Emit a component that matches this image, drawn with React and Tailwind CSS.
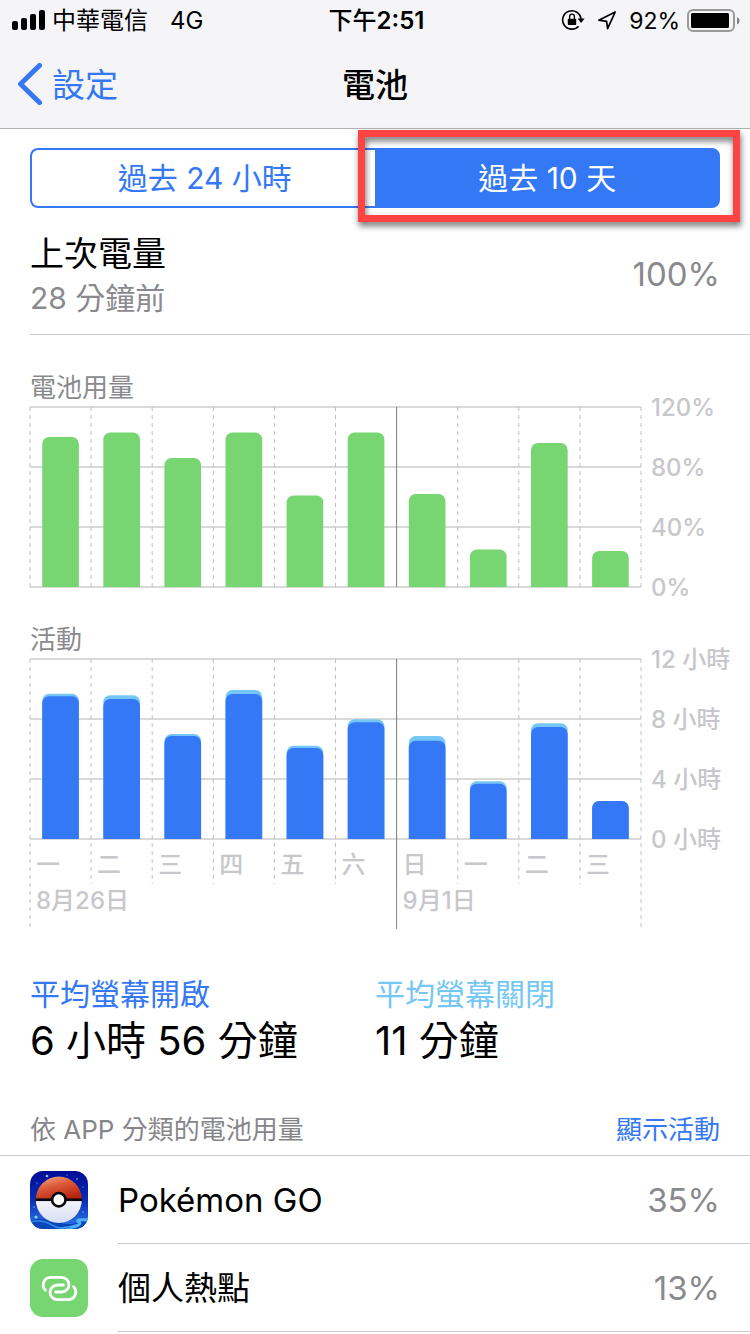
import { useState } from "react";

const days = [
  { label: "一", usage: 100, screenOn: 571, total: 581 },
  { label: "二", usage: 103, screenOn: 560, total: 575 },
  { label: "三", usage: 86, screenOn: 412, total: 420 },
  { label: "四", usage: 103, screenOn: 580, total: 596 },
  { label: "五", usage: 61, screenOn: 364, total: 373 },
  { label: "六", usage: 103, screenOn: 467, total: 479 },
  { label: "日", usage: 62, screenOn: 393, total: 412 },
  { label: "一", usage: 25, screenOn: 221, total: 231 },
  { label: "二", usage: 96, screenOn: 448, total: 463 },
  { label: "三", usage: 24, screenOn: 152, total: 152 },
];

const weeks = [
  { start: 0, label: "8月26日" },
  { start: 6, label: "9月1日" },
];

const usageSeries = [{ key: "usage", color: "#77d672" }];
const activitySeries = [
  { key: "total", color: "#75c6f5" },
  { key: "screenOn", color: "#3478f6" },
];

const PLOT_HEIGHT = 180;

function Chart({ title, series, max, ticks, withDates }) {
  return (
    <section>
      <h2 className="text-[26px] leading-[34px] text-[#8a8a8e]">{title}</h2>
      <div className="mt-[2px] flex">
        <svg
          className={`min-w-0 flex-1 overflow-visible ${withDates ? "h-[270px]" : "h-[180px]"}`}
          role="img"
          aria-label={title}
        >
          {ticks.map((tick, i) => (
            <line
              key={tick}
              x1="0"
              x2="100%"
              y1={i * 60}
              y2={i * 60}
              stroke="#d9d9d9"
              strokeWidth="2"
            />
          ))}

          {/* Day separators, the outer two run down past the dates */}
          {Array.from({ length: days.length + 1 }, (_, i) => {
            const isEdge = i === 0 || i === days.length;
            const labelled = isEdge ? 270 : 225;
            return (
              <line
                key={i}
                x1={`${i * 10}%`}
                x2={`${i * 10}%`}
                y1="0"
                y2={withDates ? labelled : PLOT_HEIGHT}
                stroke="#c0c0c0"
                strokeDasharray="4 4"
              />
            );
          })}
          <line
            x1="60%"
            x2="60%"
            y1="0"
            y2={withDates ? 270 : PLOT_HEIGHT}
            stroke="#808080"
          />

          {/* Nested svg clips the rounded bottoms of the bars */}
          <svg width="100%" height={PLOT_HEIGHT}>
            {series.map(({ key, color }) =>
              days.map((day, i) => {
                const height = (day[key] / max) * PLOT_HEIGHT;
                return (
                  <rect
                    key={`${key}-${i}`}
                    x={`${i * 10 + 2}%`}
                    y={PLOT_HEIGHT - height}
                    width="6%"
                    height={height + 12}
                    rx="7"
                    fill={color}
                  />
                );
              })
            )}
          </svg>

          {withDates && (
            <g fill="#c7c7cc" fontSize="24" fontWeight="500">
              {days.map((day, i) => (
                <text key={i} x={`${i * 10}%`} y="214" dx="6">
                  {day.label}
                </text>
              ))}
              {weeks.map((week) => (
                <text key={week.label} x={`${week.start * 10}%`} y="250" dx="6">
                  {week.label}
                </text>
              ))}
            </g>
          )}
        </svg>
        <ul className="-mt-[29px] -mb-[31px] w-[109px] shrink-0 pl-[10px] text-2xl font-medium text-[#c7c7cc]">
          {ticks.map((tick) => (
            <li key={tick} className="flex h-[60px] items-center whitespace-nowrap">
              {tick}
            </li>
          ))}
        </ul>
      </div>
    </section>
  );
}

function SignalIcon() {
  return (
    <svg className="h-5 w-[34px]" viewBox="0 0 34 20" aria-hidden="true">
      <rect x="0" y="11" width="6" height="9" rx="2" />
      <rect x="9" y="8" width="6" height="12" rx="2" />
      <rect x="18" y="4" width="6" height="16" rx="2" />
      <rect x="27" y="0" width="6" height="20" rx="2" />
    </svg>
  );
}

function RotationLockIcon() {
  return (
    <svg className="h-6 w-6" viewBox="0 0 24 24" fill="none" stroke="#000" aria-hidden="true">
      <path strokeWidth="1.6" d="M20 11.2 A9.2 9.2 0 1 0 17.6 18.2" />
      <path fill="#000" stroke="none" d="M16.6 10.6 H23.6 L20.1 15 Z" />
      <rect x="6.8" y="10.8" width="8.4" height="6.2" rx="0.8" fill="#000" stroke="none" />
      <path strokeWidth="1.3" d="M8.6 11 V8.8 A2.4 2.6 0 0 1 13.4 8.8 V11" />
    </svg>
  );
}

function LocationIcon() {
  return (
    <svg
      className="h-5 w-5"
      viewBox="0 0 20 20"
      fill="none"
      stroke="#000"
      strokeWidth="1.7"
      strokeLinejoin="round"
      aria-hidden="true"
    >
      <path d="M18.2 2 L1.8 10.2 L9.6 11.3 L10.6 18.6 Z" />
    </svg>
  );
}

function BatteryIcon() {
  return (
    <svg className="h-6 w-[54px]" viewBox="0 0 54 24" aria-hidden="true">
      <rect x="1" y="2" width="46" height="21" rx="5" fill="none" stroke="#999" strokeWidth="2" />
      <rect x="4" y="5" width="38" height="15" rx="1.5" />
      <path fill="#808080" d="M50 9 A4 4 0 0 1 50 16.5 Z" />
    </svg>
  );
}

function PokemonGoIcon() {
  return (
    <svg className="h-[58px] w-[58px] rounded-[13px]" viewBox="0 0 58 58" aria-hidden="true">
      <defs>
        <linearGradient id="sky" x1="0" y1="0" x2="0" y2="1">
          <stop offset="0" stopColor="#000c96" />
          <stop offset="0.5" stopColor="#0a2cb4" />
          <stop offset="1" stopColor="#2f7cf0" />
        </linearGradient>
        <linearGradient id="ballTop" x1="0.1" y1="0" x2="0.6" y2="1">
          <stop offset="0" stopColor="#f0a888" />
          <stop offset="0.45" stopColor="#dc5a3a" />
          <stop offset="1" stopColor="#b8230f" />
        </linearGradient>
        <linearGradient id="ballBottom" x1="0" y1="0" x2="0" y2="1">
          <stop offset="0" stopColor="#f6f6fb" />
          <stop offset="1" stopColor="#d5dcf3" />
        </linearGradient>
      </defs>
      <rect width="58" height="58" fill="url(#sky)" />
      <path fill="#0b46b8" d="M0 49 Q14 46 28 51 T58 48 V58 H0 Z" />
      <path
        fill="none"
        stroke="#4fb0f5"
        strokeWidth="3"
        d="M58 49 Q44 48 49 51 Q54 55 30 58"
      />
      <path fill="none" stroke="#2f86e8" strokeWidth="1.5" d="M0 51 Q12 48 22 54 T40 56" />
      <g fill="#7fd0ff">
        <circle cx="17" cy="5" r="1.3" />
        <circle cx="6" cy="46" r="1.6" />
        <circle cx="7" cy="12" r="0.6" />
        <circle cx="37" cy="4" r="0.6" />
        <circle cx="47" cy="8" r="0.8" />
        <circle cx="53" cy="16" r="0.6" />
        <circle cx="4" cy="36" r="0.7" />
        <circle cx="53" cy="41" r="0.7" />
      </g>
      <path fill="url(#ballTop)" d="M5.8 28.5 A23 23 0 0 1 51.8 28.5 Z" />
      <path fill="url(#ballBottom)" d="M5.8 29 A23 23 0 0 0 51.8 29 Z" />
      <rect x="5.5" y="27.4" width="46.6" height="2.7" fill="#0a0a0a" />
      <circle cx="28.8" cy="28.7" r="6.7" fill="#fff" stroke="#0a0a0a" strokeWidth="2.6" />
    </svg>
  );
}

function HotspotIcon() {
  return (
    <svg
      className="h-[58px] w-[58px] rounded-[13px] bg-[#77d672]"
      viewBox="0 0 58 58"
      fill="none"
      stroke="#fff"
      strokeWidth="2.8"
      strokeLinecap="round"
      aria-hidden="true"
    >
      <path d="M15.4 31.2 A7.6 7.6 0 0 1 20.4 18.3 H31.6 A7.3 7.3 0 0 1 31.6 33 H25.6" />
      <path d="M43.6 27.8 A7.6 7.6 0 0 1 38.6 40.7 H27.4 A7.3 7.3 0 0 1 27.4 26 H33.4" />
    </svg>
  );
}

const apps = [
  { name: "Pokémon GO", share: "35%", Icon: PokemonGoIcon },
  { name: "個人熱點", share: "13%", Icon: HotspotIcon },
];

function StatusBar() {
  return (
    <div className="grid h-10 grid-cols-[1fr_auto_1fr] items-center pr-[9px] pl-3 text-2xl">
      <div className="flex items-center">
        <SignalIcon />
        <span className="ml-[6px] pt-[2px]">中華電信</span>
        <span className="ml-[22px] pt-[2px]">4G</span>
      </div>
      <time className="pt-[2px] font-medium">
        下午<span className="font-semibold">2:51</span>
      </time>
      <div className="flex items-center justify-end">
        <RotationLockIcon />
        <span className="ml-3">
          <LocationIcon />
        </span>
        <span className="mr-[7px] ml-3 pt-[2px] text-[23px]">92%</span>
        <BatteryIcon />
      </div>
    </div>
  );
}

function PeriodTabs() {
  const [period, setPeriod] = useState("10d");
  const active = "bg-[#3478f6] text-white";
  const inactive = "bg-white text-[#3478f6]";

  return (
    <div className="mt-[19px] flex h-[60px] px-[30px] text-[30px]">
      <button
        type="button"
        aria-pressed={period === "24h"}
        onClick={() => setPeriod("24h")}
        className={`flex-1 rounded-l-lg border-2 border-r-0 border-[#3478f6] ${
          period === "24h" ? active : inactive
        }`}
      >
        過去 24 小時
      </button>
      <div className="relative -ml-[3px] flex flex-1">
        <button
          type="button"
          aria-pressed={period === "10d"}
          onClick={() => setPeriod("10d")}
          className={`flex-1 rounded-r-lg border-2 border-[#3478f6] ${
            period === "10d" ? active : inactive
          }`}
        >
          過去 10 天
        </button>
        {/* Callout frame */}
        <div className="pointer-events-none absolute -top-[18px] -right-5 -bottom-[14px] -left-[17px] border-[7px] border-[#ff4343] drop-shadow-[1px_4px_3px_rgba(0,0,0,0.55)]" />
      </div>
    </div>
  );
}

export default function App() {
  return (
    <div className="min-h-screen bg-white font-['Inter','Noto_Sans_CJK_TC',sans-serif] font-[390] text-black">
      <header className="border-b border-[#b2b2b2] bg-[#f5f5f7]">
        <StatusBar />
        <nav className="grid h-[88px] grid-cols-[1fr_auto_1fr] items-center px-4 text-[33px]">
          <a href="#settings" className="flex items-center gap-2 text-[#3478f6]">
            <svg
              className="h-[44px] w-7"
              viewBox="0 0 28 44"
              fill="none"
              stroke="currentColor"
              strokeWidth="5"
              strokeLinecap="round"
              strokeLinejoin="round"
              aria-hidden="true"
            >
              <path d="M23.5 3.5 L4.5 22 L23.5 40.5" />
            </svg>
            <span className="pt-1">設定</span>
          </a>
          <h1 className="pt-1 font-medium">電池</h1>
        </nav>
      </header>

      <main>
        <PeriodTabs />

        <div className="ml-[30px] flex items-center justify-between border-b border-[#c8c7cc] pt-6 pr-[30px] pb-[14px]">
          <div>
            <p className="text-[34px] leading-[44px]">上次電量</p>
            <p className="text-[30px] leading-[44px] text-[#8a8a8e]">28 分鐘前</p>
          </div>
          <p className="pb-[2px] text-[33px] text-[#8a8a8e]">100%</p>
        </div>

        <div className="flex flex-col gap-9 pt-9 pl-[30px]">
          <Chart
            title="電池用量"
            series={usageSeries}
            max={120}
            ticks={["120%", "80%", "40%", "0%"]}
          />
          <Chart
            title="活動"
            series={activitySeries}
            max={720}
            ticks={["12 小時", "8 小時", "4 小時", "0 小時"]}
            withDates
          />
        </div>

        <dl className="mt-[43px] grid grid-cols-2 px-[30px]">
          <div>
            <dt className="text-[30px] leading-[44px] text-[#3478f6]">平均螢幕開啟</dt>
            <dd className="text-[40px] leading-[50px]">6 小時 56 分鐘</dd>
          </div>
          <div>
            <dt className="text-[30px] leading-[44px] text-[#75c6f5]">平均螢幕關閉</dt>
            <dd className="text-[40px] leading-[50px]">11 分鐘</dd>
          </div>
        </dl>

        <section>
          <div className="mt-11 flex items-center justify-between border-b border-[#c8c7cc] px-[30px] pb-[5px] text-[26px] leading-10">
            <h2 className="text-[#86868a]">依 APP 分類的電池用量</h2>
            <button type="button" className="text-[#3478f6]">
              顯示活動
            </button>
          </div>
          <ul>
            {apps.map(({ name, share, Icon }) => (
              <li key={name} className="flex items-center gap-[30px] pl-[30px]">
                <Icon />
                <div className="flex h-[88px] flex-1 items-center justify-between border-b border-[#c8c7cc] pt-[3px] pr-[30px] text-[33px]">
                  <span>{name}</span>
                  <span className="text-[#8a8a8e]">{share}</span>
                </div>
              </li>
            ))}
          </ul>
        </section>
      </main>
    </div>
  );
}
